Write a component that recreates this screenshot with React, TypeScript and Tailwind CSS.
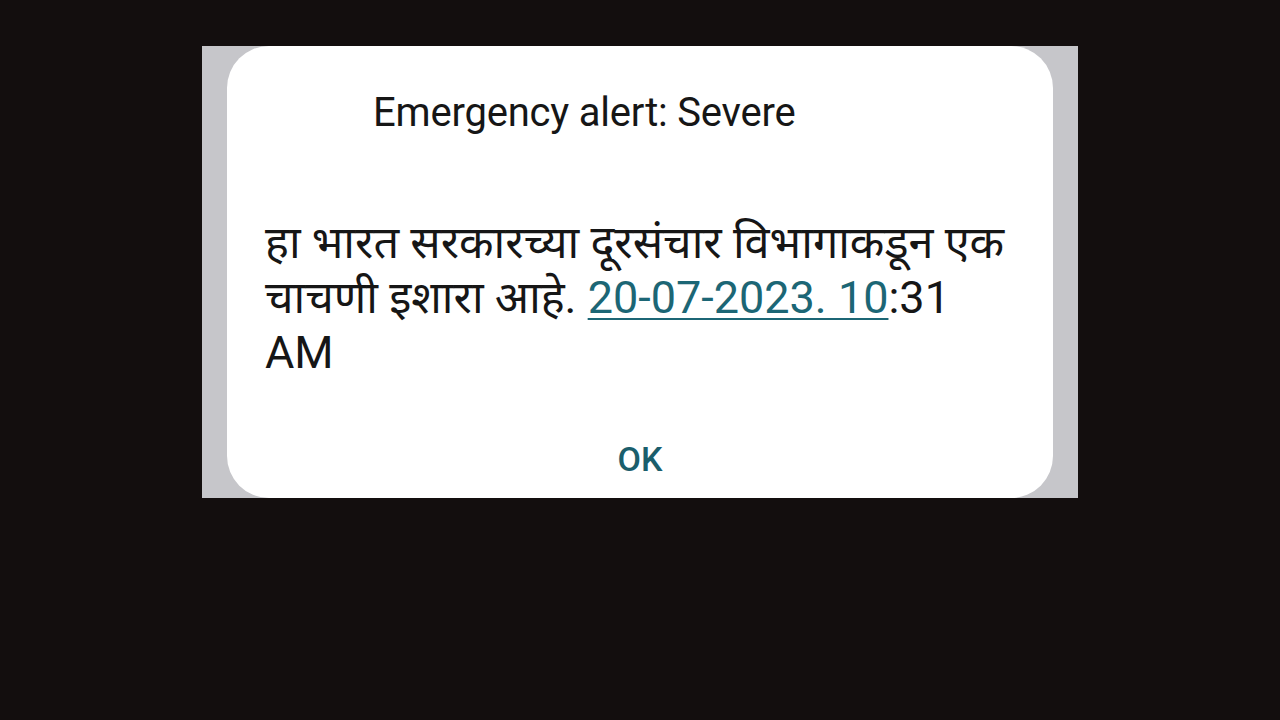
export default function App() {
  return (
    <div className="w-[1280px] h-[720px] bg-[#130e0e] pt-[46px]">
      <div className="ml-[202px] w-[876px] h-[452px] bg-[#c6c6ca] px-[25px] overflow-hidden">
        <div className="h-full bg-white rounded-[42px] flex flex-col font-['Roboto','Noto_Sans','Noto_Sans_Devanagari',sans-serif] text-[#161616]">
          <div className="pl-[146px] pt-[45px] text-[40px] leading-[44px] tracking-[-0.2px]">
            Emergency alert: Severe
          </div>
          <p className="pl-[38px] pt-[80px] text-[45px] leading-[55px]">
            हा भारत सरकारच्या दूरसंचार विभागाकडून एक
            <br />
            चाचणी इशारा आहे.{' '}
            <span className="text-[#1c6675] underline decoration-[2px] underline-offset-[5px]">20-07-2023. 10</span>
            :31
            <br />
            AM
          </p>
          <div className="mt-auto pb-[13px] text-center text-[34px] font-medium text-[#1a5e6c]">OK</div>
        </div>
      </div>
    </div>
  )
}
